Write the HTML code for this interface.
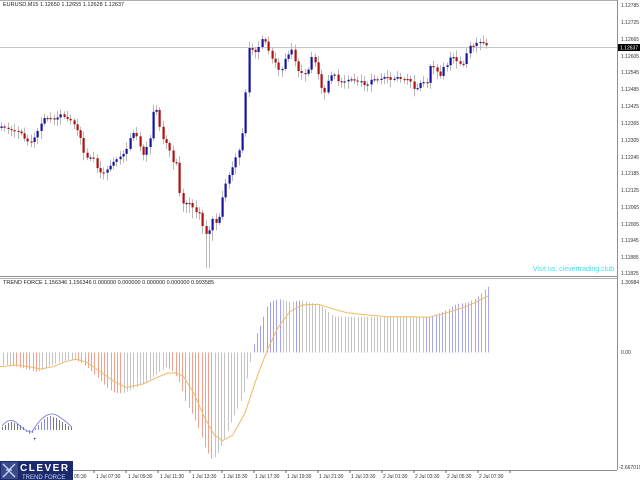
<!DOCTYPE html>
<html><head><meta charset="utf-8"><style>
html,body{margin:0;padding:0;background:#fff;width:640px;height:480px;overflow:hidden}
svg{display:block}
text{font-family:"Liberation Sans",sans-serif}
</style></head><body>
<svg id="s" width="640" height="480" viewBox="0 0 640 480" xmlns="http://www.w3.org/2000/svg">
<rect width="640" height="480" fill="#fff"/>
<line x1="0" y1="0.5" x2="617" y2="0.5" stroke="#b0b0b0"/>
<line x1="617.5" y1="0" x2="617.5" y2="470" stroke="#909090"/>
<line x1="0" y1="276.5" x2="617" y2="276.5" stroke="#909090"/>
<line x1="0" y1="278.5" x2="617" y2="278.5" stroke="#b0b0b0"/>
<line x1="0" y1="470.5" x2="617" y2="470.5" stroke="#909090"/>
<line x1="0" y1="47.5" x2="617" y2="47.5" stroke="#c8c8c8"/>
<g id="cand"></g>
<g id="hist"></g>
<path id="sig" fill="none" stroke="#f5b860" stroke-width="1"/>
<text x="3" y="6" font-size="5.5" fill="#222">EURUSD,M15  1.12650 1.12655 1.12628 1.12637</text>
<text x="3" y="284" font-size="5.5" fill="#222">TREND FORCE 1.156346 1.156346 0.000000 0.000000 0.000000 0.000000 0.993585</text>
<text x="614" y="271" font-size="7" fill="#40e0f0" text-anchor="end">Visit us: clevertrading.club</text>
<g font-size="5" fill="#333">
<text x="621" y="7">1.12785</text><text x="621" y="24">1.12725</text><text x="621" y="41">1.12665</text>
<text x="621" y="58">1.12605</text><text x="621" y="74">1.12545</text><text x="621" y="91">1.12485</text>
<text x="621" y="108">1.12425</text><text x="621" y="125">1.12365</text><text x="621" y="142">1.12305</text>
<text x="621" y="159">1.12245</text><text x="621" y="175">1.12185</text><text x="621" y="192">1.12125</text>
<text x="621" y="209">1.12065</text><text x="621" y="226">1.12005</text><text x="621" y="242">1.11945</text>
<text x="621" y="259">1.11885</text><text x="621" y="275">1.11825</text>
<text x="621" y="284">1.30984</text><text x="621" y="354">0.00</text><text x="619" y="469">-2.667019</text>
</g>
<rect x="618" y="44" width="22" height="7" fill="#000"/>
<text x="620" y="49.5" font-size="5" fill="#fff">1.12637</text>
<g id="ticks" font-size="5" fill="#333">
<text x="74" y="478">05:30</text>
<text x="96" y="478">1 Jul 07:30</text><text x="128" y="478">1 Jul 09:30</text><text x="160" y="478">1 Jul 11:30</text>
<text x="192" y="478">1 Jul 13:30</text><text x="223" y="478">1 Jul 15:30</text><text x="255" y="478">1 Jul 17:30</text>
<text x="287" y="478">1 Jul 19:30</text><text x="319" y="478">1 Jul 21:30</text><text x="351" y="478">1 Jul 23:30</text>
<text x="383" y="478">2 Jul 01:30</text><text x="415" y="478">2 Jul 03:30</text><text x="447" y="478">2 Jul 05:30</text>
<text x="479" y="478">2 Jul 07:30</text>
</g>
<g id="mini"></g>
<rect x="0" y="461" width="73" height="19" fill="#1a2a6a"/>
<rect x="1" y="462" width="17" height="17" fill="#3a4a8a"/>
<path d="M3 464 L9 470 L15 464 M3 477 L9 471 L15 477 M6 470 h6" stroke="#cfd8ff" stroke-width="1.3" fill="none"/>
<text x="20" y="471" font-size="10" font-weight="bold" fill="#fff" letter-spacing="1.5">CLEVER</text>
<text x="22" y="479" font-size="6" fill="#cfd8ff">TREND FORCE</text>
</svg>
<script>
(function(){
var NS="http://www.w3.org/2000/svg";
function el(t,a,p){var e=document.createElementNS(NS,t);for(var k in a)e.setAttribute(k,a[k]);p.appendChild(e);return e;}
function interp(pts,x){for(var i=0;i<pts.length-1;i++){if(x>=pts[i][0]&&x<=pts[i+1][0]){var t=(x-pts[i][0])/(pts[i+1][0]-pts[i][0]);return pts[i][1]+t*(pts[i+1][1]-pts[i][1]);}}return pts[pts.length-1][1];}
var P=[[0,126],[10,130],[20,132],[25,140],[30,143],[35,136],[40,125],[43,118],[50,118],[55,120],[60,114],[65,118],[70,120],[75,126],[80,137],[83,152],[87,158],[93,157],[98,172],[103,173],[108,168],[113,162],[118,158],[123,154],[127,148],[130,137],[133,133],[137,137],[140,148],[143,155],[147,145],[150,137],[153,110],[157,110],[160,131],[163,140],[168,145],[172,162],[177,163],[180,204],[185,203],[190,203],[195,212],[200,213],[203,230],[207,236],[210,227],[213,216],[217,227],[220,210],[223,192],[227,178],[231,171],[234,160],[237,154],[240,147],[244,118],[247,54],[250,42],[253,55],[258,48],[263,36],[268,50],[273,62],[277,63],[280,80],[283,58],[287,60],[290,45],[293,55],[297,70],[300,73],[303,73],[307,75],[310,57],[313,57],[320,82],[323,98],[327,82],[333,72],[338,82],[343,82],[347,80],[350,79],[353,80],[357,82],[360,80],[363,85],[367,85],[370,80],[373,79],[377,80],[380,79],[383,77],[387,77],[390,80],[393,79],[397,77],[400,79],[403,79],[407,79],[410,81],[413,89],[417,88],[420,83],[423,82],[427,83],[430,66],[433,67],[437,72],[440,76],[443,67],[447,65],[450,57],[453,57],[457,62],[460,64],[463,64],[467,51],[470,45],[473,46],[477,42],[480,42],[483,43],[487,46]];
var g=document.getElementById('cand');var prev=interp(P,0)+2;
for(var x=1;x<=487;x+=3.3){
 var c=interp(P,x);var o=prev;var hi=Math.min(o,c)-2-((x*7)%5);var lo=Math.max(o,c)+2+((x*13)%6);
 if(x>180&&x<215)lo+=4; if(x>205&&x<210)lo=268;if(x>262&&x<265)hi=16;
 var cx=Math.round(x)+0.5;
 el('line',{x1:cx,y1:hi,x2:cx,y2:lo,stroke:'#b8b8b8','stroke-width':1},g);
 var up=c<o;var top=Math.min(o,c),h=Math.max(1.2,Math.abs(o-c));
 el('rect',{x:cx-1,y:top,width:2.2,height:h,fill:up?'#1414a0':'#b01010'},g);
 prev=c;}
var H=[[8,285],[24,285],[40,290],[56,295],[72,300],[88,305],[104,300],[120,290],[136,280],[152,275],[168,270],[184,270],[200,280],[216,295],[232,315],[248,335],[264,355],[280,368],[296,370],[312,365],[328,355],[344,345],[360,335],[376,320],[392,305],[408,290],[424,305],[440,340],[456,400],[472,435],[488,480],[504,540],[520,570],[536,545],[552,500],[568,450],[584,410],[600,360],[616,260],[624,205],[640,160],[656,100],[672,90],[688,88],[704,95],[720,95],[736,90],[752,95],[768,100],[784,105],[800,120],[816,140],[1048,142],[1064,135],[1080,128],[1096,120],[1112,105],[1128,100],[1144,98],[1160,90],[1176,75],[1186,60],[1195,50]];
var hg=document.getElementById('hist');var zero=352.5;var pv=null;var N=150;
for(var i=0;i<N;i++){
 var xi=8+i*(1187/(N-1));var yv=interp(H,xi)/3+270;var X=Math.round(xi/2.45)+0.5;
 var col='#c4c4c4';
 if(pv!==null){ if(yv>zero&&yv>pv+0.05)col='#f4a090'; if(yv<zero&&yv<pv-0.05)col='#a0a0f4';}
 if(xi>1040)col='#a8a8f4';
 el('line',{x1:X,y1:zero,x2:X,y2:yv,stroke:col,'stroke-width':1},hg);pv=yv;}
var S=[[0,290],[40,285],[70,290],[100,297],[130,290],[160,275],[185,268],[210,275],[240,300],[280,335],[310,352],[350,342],[380,325],[410,310],[430,308],[450,320],[475,370],[500,440],[525,495],[545,512],[570,495],[600,430],[630,320],[655,240],[680,175],[710,125],[740,105],[780,103],[810,115],[850,128],[900,135],[950,140],[1000,140],[1050,142],[1090,130],[1130,115],[1160,100],[1195,78]];
var d='';S.forEach(function(p,i){d+=(i?'L':'M')+(p[0]/2.45).toFixed(1)+' '+(p[1]/3+270).toFixed(1)+' ';});
document.getElementById('sig').setAttribute('d',d);
var tg=document.getElementById('ticks');for(var t=0;t<14;t++){var tx=96+t*32-2;el('line',{x1:tx,y1:470,x2:tx,y2:473,stroke:'#666'},tg);}
var m=document.getElementById('mini');
for(var j=0;j<24;j++){var mx=2+j*3;var v=[3,5,7,8,7,6,5,3,-2,-4,-3,2,5,8,11,13,14,13,12,10,8,6,4,3][j];var zy=430;
 el('line',{x1:mx+0.5,y1:zy,x2:mx+0.5,y2:zy-v,stroke:(v<0||(j>10&&j<17))?'#8a8ad8':'#777','stroke-width':1},m);}
el('path',{d:'M2 426 Q10 416 18 424 T32 432 Q46 408 58 416 T72 428',fill:'none',stroke:'#6a7ad8','stroke-width':0.8},m);
el('text',{x:33,y:441,'font-size':6,fill:'#333'},m).textContent='+';
})();
</script>
</body></html>
